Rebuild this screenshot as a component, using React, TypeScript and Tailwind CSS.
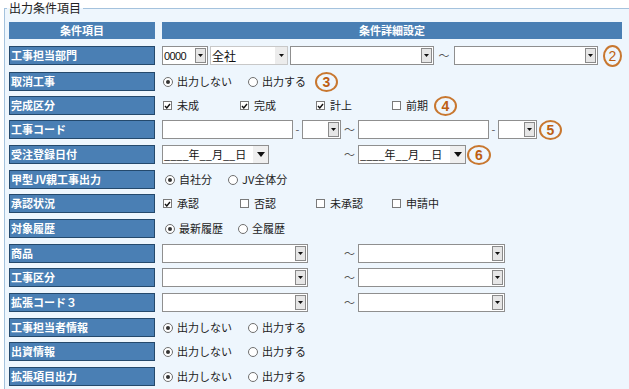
import type { ReactNode } from 'react';

const Tri = ({ big }: { big?: boolean }) =>
  big ? (
    <svg width="8" height="5" viewBox="0 0 8 5"><path d="M0 0h8L4 5z" fill="#111" /></svg>
  ) : (
    <svg width="5" height="3" viewBox="0 0 5 3"><path d="M0 0h5L2.5 3z" fill="#111" /></svg>
  );

function Select({ w, value }: { w: string; value?: ReactNode }) {
  return (
    <div className={`flex h-[19px] shrink-0 items-center border border-[#8f8f8f] bg-white ${w}`}>
      <span className="flex-1 truncate pl-[1px] text-[11px] leading-none text-[#111]">{value}</span>
      <span className="mr-[1px] flex h-[15px] w-[11px] items-center justify-center border border-[#8a8a8a] bg-[#e6e6e6]">
        <Tri />
      </span>
    </div>
  );
}

function DateSelect({ w }: { w: string }) {
  return (
    <div className={`flex h-[19px] shrink-0 items-center border border-[#8f8f8f] bg-white ${w}`}>
      <span className="flex-1 pl-[1px] text-[11px] leading-none text-[#111]">____年__月__日</span>
      <span className="flex h-full w-[15px] items-center justify-center bg-[#efefef]">
        <Tri big />
      </span>
    </div>
  );
}

const Input = ({ w }: { w: string }) => (
  <div className={`h-[19px] shrink-0 border border-[#8f8f8f] bg-white ${w}`} />
);

const Dash = () => <span className="w-[9px] text-center text-[11px] text-[#555]">-</span>;
const Tilde = ({ w = 'w-[17px]' }: { w?: string }) => (
  <span className={`${w} shrink-0 text-center text-[11px] text-[#555]`}>〜</span>
);

function Radio({ on, label, className = '' }: { on?: boolean; label: string; className?: string }) {
  return (
    <span className={`flex items-center ${className}`}>
      <span className="flex h-[10px] w-[10px] items-center justify-center rounded-full border border-[#6f6f6f] bg-white">
        {on && <span className="h-[4px] w-[4px] rounded-full bg-[#333]" />}
      </span>
      <span className="ml-[4px] text-[11px] text-[#222]">{label}</span>
    </span>
  );
}

function Check({ on, label, className = '' }: { on?: boolean; label: string; className?: string }) {
  return (
    <span className={`flex items-center ${className}`}>
      <span className="flex h-[9px] w-[9px] items-center justify-center border border-[#7a7a7a] bg-white">
        {on && (
          <svg width="7" height="6" viewBox="0 0 7 6">
            <path d="M1 3l1.8 2L6 1" stroke="#111" strokeWidth="1.4" fill="none" />
          </svg>
        )}
      </span>
      <span className="ml-[5px] text-[11px] text-[#222]">{label}</span>
    </span>
  );
}

function Mark({ n, className = '' }: { n: number; className?: string }) {
  return (
    <span
      className={`flex h-[20px] w-[23px] shrink-0 items-center justify-center rounded-[50%] border-2 border-[#c8772f] font-['Liberation_Sans',sans-serif] text-[14px] font-bold leading-none text-[#bd5e12] ${className}`}
    >
      {n}
    </span>
  );
}

function Row({ h, label, children }: { h: string; label: string; children?: ReactNode }) {
  return (
    <div className={`flex ${h}`}>
      <div className="h-[19px] w-[146px] shrink-0 border border-[#24496c] bg-[#4a7fb4] pl-[1px] text-[11px] font-bold leading-[17px] text-white">
        {label}
      </div>
      <div className="ml-[7px] flex h-[19px] flex-1 items-center">{children}</div>
    </div>
  );
}

const OutputRadios = () => (
  <>
    <Radio on label="出力しない" className="ml-[1px]" />
    <Radio label="出力する" className="ml-[16px]" />
  </>
);

const RangeSelects = () => (
  <>
    <div className="flex w-[179px] shrink-0">
      <Select w="w-[146px]" />
    </div>
    <Tilde />
    <Select w="w-[147px]" />
  </>
);

export default function App() {
  return (
    <div className="h-[389px] w-[629px] overflow-hidden bg-white font-['Noto_Sans_CJK_JP',sans-serif]">
      <fieldset className="ml-[4px] w-[615px] border border-[#a4c2dd] bg-[#eef6fd] pt-[6px] pb-[20px] pl-[4px] pr-[10px]">
        <legend className="ml-[-2px] px-[2px] text-[12px] leading-[16px] text-[#222]">出力条件項目</legend>

        {/* header */}
        <div className="flex h-[24px]">
          <div className="h-[17px] w-[146px] shrink-0 bg-[#4a7fb4] text-center text-[11px] font-bold leading-[17px] text-white">
            条件項目
          </div>
          <div className="ml-[7px] h-[17px] flex-1 bg-[#4a7fb4] text-center text-[11px] font-bold leading-[17px] text-white">
            条件詳細設定
          </div>
        </div>

        <Row h="h-[26px]" label="工事担当部門">
          <Select w="w-[46px]" value={<span className="font-['Liberation_Sans',sans-serif] tracking-[-0.6px]">0000</span>} />
          <div className="ml-[2px] flex h-[19px] w-[78px] shrink-0 items-center border border-[#c8c8c8] bg-white">
            <span className="flex-1 pl-[1px] text-[12px] leading-none text-[#111]">全社</span>
            <span className="flex h-full w-[12px] items-center justify-center bg-[#ececec]">
              <Tri />
            </span>
          </div>
          <div className="ml-[2px]">
            <Select w="w-[144px]" />
          </div>
          <Tilde w="w-[20px]" />
          <Select w="w-[144px]" />
          <Mark n={2} className="ml-[5px] !h-[22px] !w-[19px] !font-normal" />
        </Row>

        <Row h="h-[24px]" label="取消工事">
          <OutputRadios />
          <Mark n={3} className="ml-[9px]" />
        </Row>

        <Row h="h-[24px]" label="完成区分">
          <Check on label="未成" className="ml-[1px] w-[77px]" />
          <Check on label="完成" className="w-[76px]" />
          <Check on label="計上" className="w-[76px]" />
          <Check label="前期" />
          <Mark n={4} className="ml-[6px]" />
        </Row>

        <Row h="h-[25px]" label="工事コード">
          <div className="flex w-[179px] shrink-0 items-center">
            <Input w="w-[131px]" />
            <Dash />
            <Select w="w-[39px]" />
          </div>
          <Tilde />
          <Input w="w-[131px]" />
          <Dash />
          <Select w="w-[39px]" />
          <Mark n={5} className="ml-[2px]" />
        </Row>

        <Row h="h-[25px]" label="受注登録日付">
          <div className="flex w-[179px] shrink-0">
            <DateSelect w="w-[107px]" />
          </div>
          <Tilde />
          <DateSelect w="w-[108px]" />
          <Mark n={6} className="ml-[1px] !w-[24px]" />
        </Row>

        <Row h="h-[24px]" label="甲型JV親工事出力">
          <Radio on label="自社分" className="ml-[3px]" />
          <Radio label="JV全体分" className="ml-[16px]" />
        </Row>

        <Row h="h-[25px]" label="承認状況">
          <Check on label="承認" className="ml-[1px] w-[77px]" />
          <Check label="否認" className="w-[76px]" />
          <Check label="未承認" className="w-[76px]" />
          <Check label="申請中" />
        </Row>

        <Row h="h-[25px]" label="対象履歴">
          <Radio on label="最新履歴" className="ml-[3px]" />
          <Radio label="全履歴" className="ml-[15px]" />
        </Row>

        <Row h="h-[24px]" label="商品">
          <RangeSelects />
        </Row>
        <Row h="h-[25px]" label="工事区分">
          <RangeSelects />
        </Row>
        <Row h="h-[25px]" label="拡張コード３">
          <RangeSelects />
        </Row>

        <Row h="h-[24px]" label="工事担当者情報">
          <OutputRadios />
        </Row>
        <Row h="h-[25px]" label="出資情報">
          <OutputRadios />
        </Row>
        <Row h="h-[25px]" label="拡張項目出力">
          <OutputRadios />
        </Row>
      </fieldset>
    </div>
  );
}
